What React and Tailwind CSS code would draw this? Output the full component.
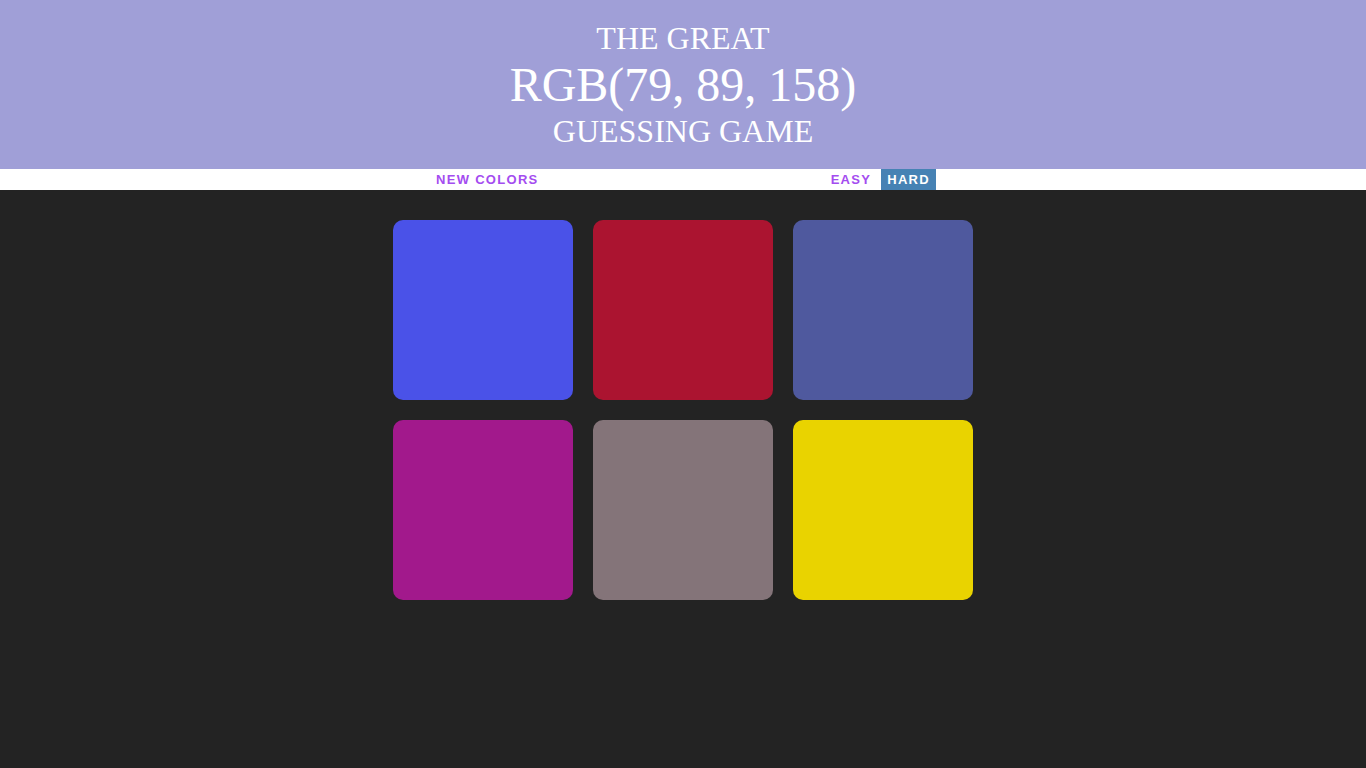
export default function App() {
  const squares = ['#4a52e8', '#ab1430', '#4f599e', '#a2198c', '#847479', '#e9d300'];

  return (
    <div className="min-h-screen bg-[#232323]">
      {/* Header */}
      <h1
        className="bg-[#a09fd7] text-white text-center uppercase font-normal pt-[20px] pb-[20px]"
        style={{ fontFamily: '"Liberation Serif", "Times New Roman", serif' }}
      >
        <div className="text-[32px] leading-[36px]">The Great</div>
        <div className="text-[48px] leading-[57px]">RGB(79, 89, 158)</div>
        <div className="text-[32px] leading-[36px]">Guessing Game</div>
      </h1>

      {/* Stripe */}
      <div className="bg-white h-[21px]">
        <div
          className="w-[506px] mx-auto h-full flex items-stretch justify-between text-[13px] font-bold tracking-[1.3px]"
          style={{ fontFamily: '"Liberation Sans", Arial, sans-serif' }}
        >
          <button className="px-[6px] uppercase text-[#a44cf0] leading-[21px]">New Colors</button>
          <div className="flex items-stretch gap-[4px]">
            <button className="px-[6px] uppercase text-[#a44cf0] leading-[21px]">Easy</button>
            <button className="px-[6px] uppercase bg-[#4682b4] text-white leading-[21px]">Hard</button>
          </div>
        </div>
      </div>

      {/* Squares */}
      <div className="w-[580px] mx-auto mt-[30px] grid grid-cols-3 gap-[20px]">
        {squares.map((c, i) => (
          <div key={i} className="w-[180px] h-[180px] rounded-[10px]" style={{ backgroundColor: c }} />
        ))}
      </div>
    </div>
  );
}
